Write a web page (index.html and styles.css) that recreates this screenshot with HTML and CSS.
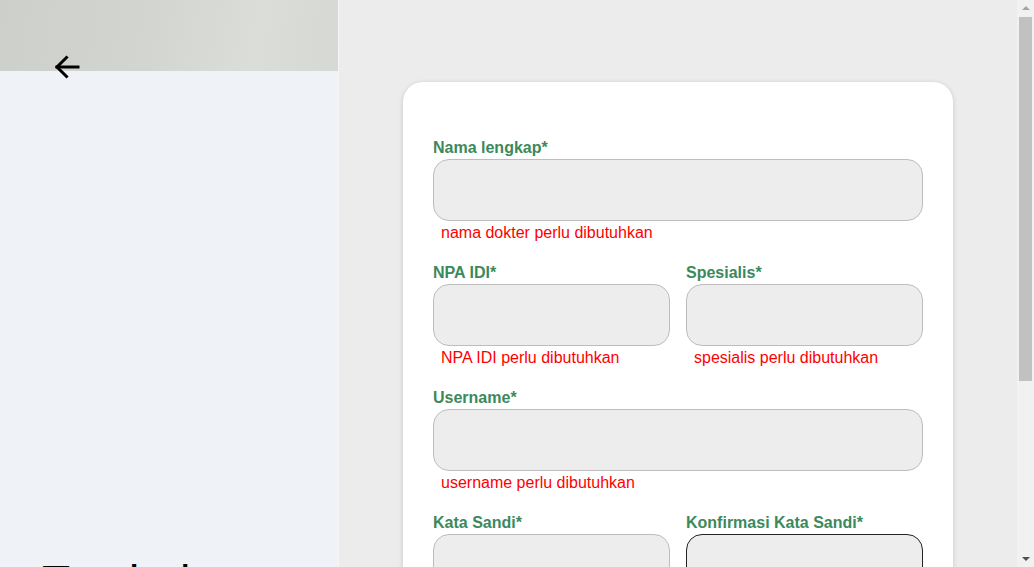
FILE: index.html
```html
<!DOCTYPE html>
<html lang="id">
<head>
<meta charset="utf-8">
<title>Tambah Dokter</title>
<link rel="stylesheet" href="styles.css">
</head>
<body>
<div class="page">
  <aside class="side">
    <div class="side-photo"></div>
    <a class="back" href="#" aria-label="Kembali">
      <svg width="28" height="26" viewBox="0 0 28 26" fill="none" stroke="#000" stroke-width="3" stroke-linecap="square" stroke-linejoin="miter">
        <path d="M25 13H4"/>
        <path d="M13.5 3.5L4 13l9.5 9.5"/>
      </svg>
    </a>
    <div class="side-body">
      <h1 class="side-title">Tambah Dokter</h1>
      <p class="side-text">Lengkapi data dokter untuk membuat akun baru.</p>
    </div>
  </aside>
  <main class="main">
    <form class="card">
      <div class="field">
        <label class="label">Nama lengkap*</label>
        <input class="input" type="text">
        <div class="error">nama dokter perlu dibutuhkan</div>
      </div>
      <div class="row">
        <div class="field">
          <label class="label">NPA IDI*</label>
          <input class="input" type="text">
          <div class="error">NPA IDI perlu dibutuhkan</div>
        </div>
        <div class="field">
          <label class="label">Spesialis*</label>
          <input class="input" type="text">
          <div class="error">spesialis perlu dibutuhkan</div>
        </div>
      </div>
      <div class="field">
        <label class="label">Username*</label>
        <input class="input" type="text">
        <div class="error">username perlu dibutuhkan</div>
      </div>
      <div class="row">
        <div class="field">
          <label class="label">Kata Sandi*</label>
          <input class="input" type="password">
          <div class="error">kata sandi perlu dibutuhkan</div>
        </div>
        <div class="field">
          <label class="label">Konfirmasi Kata Sandi*</label>
          <input class="input input-focus" type="password">
          <div class="error">konfirmasi kata sandi perlu dibutuhkan</div>
        </div>
      </div>
      <button class="submit" type="button">Daftar</button>
    </form>
  </main>
</div>
<div class="scrollbar" aria-hidden="true">
  <span class="sb-arrow sb-up"></span>
  <span class="sb-thumb"></span>
  <span class="sb-arrow sb-down"></span>
</div>
</body>
</html>
```

FILE: styles.css
```css
* { box-sizing: border-box; }

html, body {
  margin: 0;
  padding: 0;
}

html { overflow: hidden; }

body {
  font-family: "Liberation Sans", Arial, sans-serif;
  background: #ececec;
  color: #000;
}

.page {
  display: flex;
  min-height: 828px;
  margin-right: 17px;
}

.side {
  position: relative;
  width: 339px;
  flex: 0 0 339px;
  background: #eff2f7;
  border-right: 1px solid #f5f5f5;
}

.side-photo {
  height: 71px;
  background: linear-gradient(100deg, #cdd0ca 0%, #d3d6d0 45%, #dbddd8 75%, #d6d9d3 100%);
}

.back {
  position: absolute;
  left: 53px;
  top: 54px;
  display: block;
  width: 28px;
  height: 26px;
}

.back svg { display: block; }

.side-body {
  padding: 0 42px;
}

.side-title {
  margin: 484px 0 0;
  font-size: 46px;
  line-height: 55px;
  font-weight: 400;
}

.side-text {
  margin: 12px 0 0;
  font-size: 16px;
  line-height: 22px;
  color: #555;
}

.main {
  flex: 1;
  display: flex;
  justify-content: center;
  align-items: flex-start;
  padding: 82px 0 40px;
}

.card {
  width: 550px;
  background: #fff;
  border-radius: 20px;
  box-shadow: 0 1px 5px rgba(0, 0, 0, 0.16);
  padding: 57px 30px 48px;
  display: flex;
  flex-direction: column;
}

.row {
  display: grid;
  grid-template-columns: 1fr 1fr;
  column-gap: 16px;
}

.field {
  display: flex;
  flex-direction: column;
  margin-bottom: 22px;
}

.label {
  font-size: 16px;
  line-height: 18px;
  font-weight: 700;
  color: #3b895c;
  margin-bottom: 2px;
}

.input {
  height: 62px;
  width: 100%;
  border: 1px solid #bdbdbd;
  border-radius: 16px;
  background: #ededed;
  padding: 0 14px;
  font: inherit;
  outline: none;
}

.input-focus {
  border-color: #222;
}

.error {
  margin-top: 3px;
  padding-left: 8px;
  font-size: 16px;
  line-height: 18px;
  color: #ff0000;
}

.submit {
  margin-top: 8px;
  height: 48px;
  border: none;
  border-radius: 16px;
  background: #3a885b;
  color: #fff;
  font: 700 16px "Liberation Sans", Arial, sans-serif;
}

/* classic scrollbar overlay */
.scrollbar {
  position: fixed;
  top: 0;
  right: 0;
  width: 17px;
  height: 100vh;
  background: #f1f1f1;
  display: flex;
  flex-direction: column;
  align-items: center;
}

.sb-arrow {
  width: 0;
  height: 0;
  border-left: 4px solid transparent;
  border-right: 4px solid transparent;
}

.sb-up {
  margin-top: 6px;
  border-bottom: 4px solid #a3a3a3;
}

.sb-thumb {
  margin-top: 7px;
  width: 13px;
  height: 364px;
  background: #c1c1c1;
}

.sb-down {
  margin-top: auto;
  margin-bottom: 6px;
  border-top: 4px solid #505050;
}
```
